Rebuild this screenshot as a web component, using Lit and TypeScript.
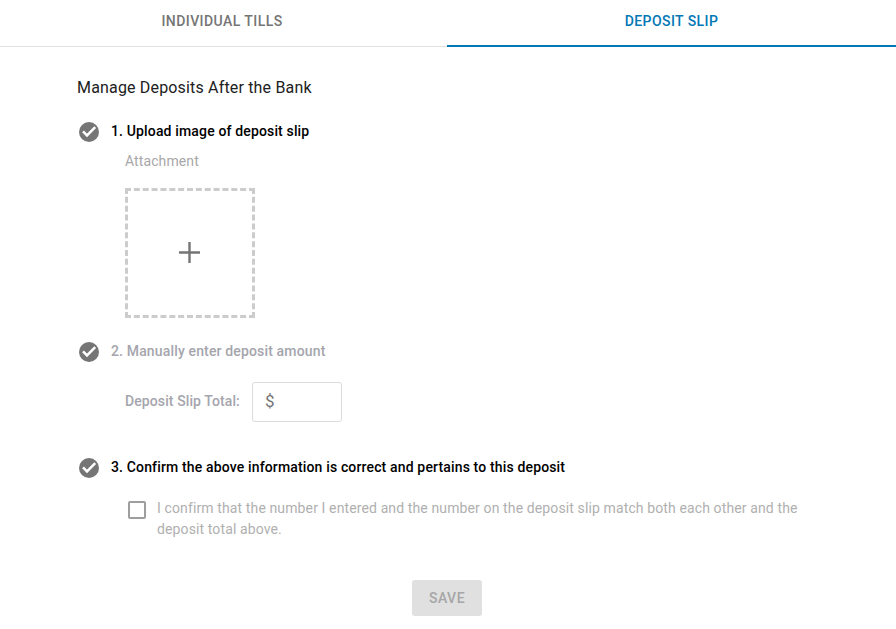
import { LitElement, html, css, svg } from "lit";
import { customElement } from "lit/decorators.js";

const check = svg`<svg class="check" width="24" height="24" viewBox="0 0 24 24"><circle cx="12" cy="12" r="10" fill="#757575"/><path d="M6 11.4l4 4 8.2-8.2" fill="none" stroke="#fff" stroke-width="2.5"/></svg>`;

@customElement("app-root")
export class AppRoot extends LitElement {
  static styles = css`
    :host { display: block; width: 896px; height: 629px; overflow: hidden; background: #fff; font-family: Roboto, sans-serif; color: #000; }
    .tabs { display: grid; grid-template-columns: 447px 449px; height: 47px; box-sizing: border-box; border-bottom: 1px solid #e0e0e0; }
    .tab { display: flex; align-items: center; justify-content: center; height: 47px; box-sizing: border-box; padding-bottom: 5px; font-size: 14px; font-weight: 500; letter-spacing: 0.43px; color: #757575; }
    .tab.active { color: #0277b5; border-bottom: 2px solid #0277b5; padding-bottom: 3px; }
    .tab:first-child { padding-right: 3px; }
    .content { padding: 31px 0 0 77px; }
    h2 { margin: 0; font-size: 16px; line-height: 20px; font-weight: 400; letter-spacing: 0.17px; color: #212121; }
    .step { display: flex; align-items: center; gap: 10px; height: 24px; font-size: 14px; font-weight: 500; letter-spacing: 0.15px; }
    .step span { padding-bottom: 2px; }
    .step.first { margin-top: 22px; }
    .step.muted { color: #a5a5ad; margin-top: 22px; }
    .step.third { margin-top: 34px; }
    .check { display: block; flex: none; }
    .indent { margin-left: 48px; }
    .label { margin-top: 7px; font-size: 14px; line-height: 20px; color: #a8a8a8; letter-spacing: 0.1px; }
    .drop { display: flex; align-items: center; justify-content: center; margin-top: 17px; width: 130px; height: 130px; box-sizing: border-box; padding: 0 1px 1px 0; border: 3px dashed #cccccc; }
    .plus { display: block; }
    .amount { display: flex; align-items: center; gap: 12px; margin-top: 18px; font-size: 14px; font-weight: 500; letter-spacing: 0.1px; color: #a5a5ad; }
    .amount span { padding-bottom: 2px; }
    .input { display: flex; align-items: center; width: 90px; height: 40px; box-sizing: border-box; padding: 0 0 2px 12px; border: 1px solid #dcdcdc; border-radius: 3px; font-size: 17px; font-weight: 400; color: #757575; }
    .confirm { display: flex; gap: 11px; margin-top: 18px; margin-left: 51px; width: 680px; font-size: 14px; line-height: 21px; color: #b0b0b0; letter-spacing: 0.12px; }
    .box { flex: none; width: 18px; height: 18px; margin-top: 3px; box-sizing: border-box; border: 2px solid #9e9e9e; border-radius: 2px; }
    .actions { display: flex; justify-content: center; margin: 40px 0 0 -77px; padding-right: 2px; }
    .save { display: flex; align-items: center; justify-content: center; width: 70px; height: 36px; border-radius: 3px; background: #e0e0e0; color: #a6a6a6; font-size: 14px; font-weight: 500; letter-spacing: 0.5px; }
  `;

  render() {
    return html`
      <div class="tabs">
        <div class="tab">INDIVIDUAL TILLS</div>
        <div class="tab active">DEPOSIT SLIP</div>
      </div>
      <div class="content">
        <h2>Manage Deposits After the Bank</h2>
        <div class="step first">${check}<span>1. Upload image of deposit slip</span></div>
        <div class="indent">
          <div class="label">Attachment</div>
          <div class="drop">
            <svg class="plus" width="21" height="21" viewBox="0 0 21 21"><path d="M10.5 0v21M0 10.5h21" stroke="#757575" stroke-width="2.4" fill="none"/></svg>
          </div>
        </div>
        <div class="step muted">${check}<span>2. Manually enter deposit amount</span></div>
        <div class="indent amount"><span>Deposit Slip Total:</span><div class="input">$</div></div>
        <div class="step third">${check}<span>3. Confirm the above information is correct and pertains to this deposit</span></div>
        <div class="confirm"><div class="box"></div><div>I confirm that the number I entered and the number on the deposit slip match both each other and the deposit total above.</div></div>
        <div class="actions"><div class="save">SAVE</div></div>
      </div>
    `;
  }
}
